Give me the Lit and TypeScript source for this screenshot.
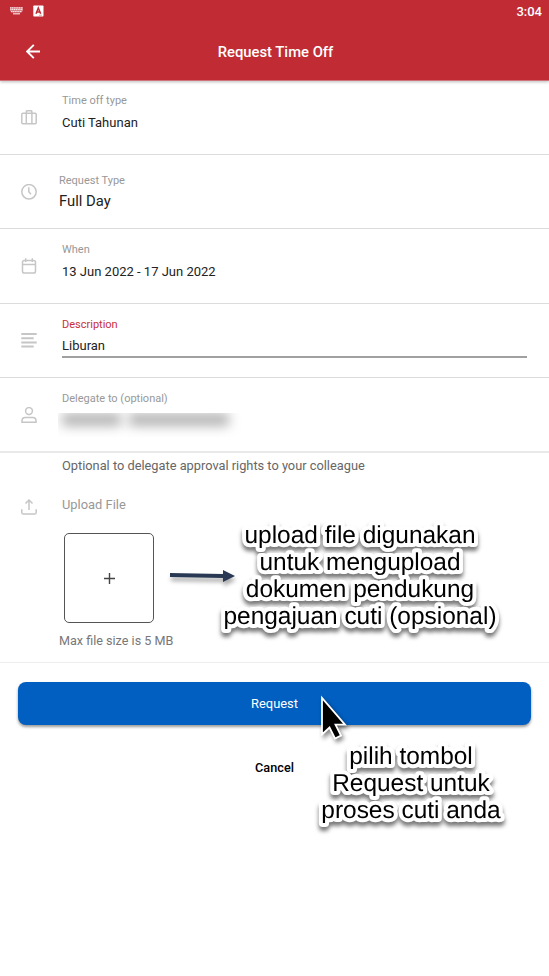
import { LitElement, html, css, svg, nothing } from "lit";
import { customElement, property } from "lit/decorators.js";

const icons = {
  suitcase: svg`<rect x=".8" y="3.2" width="14.4" height="10.6" rx="1"/><path d="M5.3 13.7V1.9Q5.3 .7 6.4 .7h3.4q1.1 0 1.1 1.2v11.8"/>`,
  clock: svg`<circle cx="8" cy="7.8" r="7.2"/><path d="M7.8 3.3v4.5l2.2 2.4"/>`,
  calendar: svg`<rect x="1.5" y="2.5" width="13" height="12.5" rx="1.8"/><path d="M1.3 6.5h13.2M4.7 .2v3.8M11.3 .2v3.8"/>`,
  lines: svg`<path stroke-width="2" d="M.3 1h15.4M.3 5.2h12.4M.3 9.4h15.4M.3 13.6h12.4"/>`,
  person: svg`<circle cx="8" cy="4" r="3.4"/><path d="M1 15.2v-1.4Q1 10.4 4.2 10.4h7.6q3.2 0 3.2 3.4v1.4z"/>`,
  upload: svg`<path d="M8 11V1.2M4.5 4.5 8 1l3.5 3.5M.8 10.3v3.2q0 1.6 1.6 1.6h11.2q1.6 0 1.6-1.6v-3.2"/>`,
};

const glyph = (name: keyof typeof icons) => html`
  <svg width="16" height="16" viewBox="0 0 16 16" fill="none" stroke="#c6c6c6" stroke-width="1.5">${icons[name]}</svg>`;

@customElement("form-row")
class FormRow extends LitElement {
  @property() icon: keyof typeof icons = "clock";
  @property() label = "";
  @property() value = "";
  @property() action = "";

  static styles = css`
    :host { display: grid; grid-template-columns: 62px 1fr 22px; box-sizing: border-box; height: 74px; border-bottom: 1px solid #dcdcdc; }
    :host([tall]) { height: 75px; }
    :host([last]) { border-bottom: 2px solid #e9e9e9; }
    .icon { padding: 28.5px 0 0 21px; }
    svg { display: block; }
    .body { padding-top: 13px; white-space: nowrap; }
    .label { font-size: 11px; line-height: 14px; color: #989898; }
    .value { font-size: 13px; line-height: 18px; margin-top: 6px; color: #222; }
    .trail { padding-top: 34px; display: flex; justify-content: flex-end; align-items: flex-start; margin-right: 24px; }
    :host([tall]) .body { padding-top: 14px; }
    :host([large]) .body { margin-left: -3px; padding-top: 19px; }
    :host([large]) .value { font-size: 14.8px; margin-top: 4px; }
    :host([large]) .trail { padding-top: 43px; margin-right: 35px; }
    :host([active]) .body { padding-top: 13.5px; }
    :host([active]) .label { color: #c92f3a; }
    :host([active]) .value { margin-top: 5.5px; padding-bottom: 1px; border-bottom: 2px solid #a0a0a0; }
    .trail.x { padding-top: 30px; margin-right: 23px; }
    .smudge { display: flex; gap: 8px; margin: 7px 0 0 -4px; padding: 0 4px; height: 24px; overflow: hidden; }
    .blob { height: 13px; background: #b2b2b2; filter: blur(6px); }
    .first { width: 59px; }
    .second { width: 100px; }
  `;

  render() {
    return html`
      <div class="icon">${glyph(this.icon)}</div>
      <div class="body">
        <div class="label">${this.label}</div>
        ${this.value
          ? html`<div class="value">${this.value}</div>`
          : html`<div class="smudge"><div class="blob first"></div><div class="blob second"></div></div>`}
      </div>
      ${this.action === "menu"
        ? html`<div class="trail"><svg width="10" height="5" viewBox="0 0 10 5"><path d="M.3 0h9.4L5 5z" fill="#999"/></svg></div>`
        : this.action === "clear"
          ? html`<div class="trail x"><svg width="13" height="13" viewBox="0 0 13 13"><path d="m.7.7 11.6 11.6M12.3.7.7 12.3" stroke="#666" stroke-width="1.3"/></svg></div>`
          : nothing}
    `;
  }
}

/** Centred caption lines with a white outline. */
const caption = (lines: string[]) =>
  lines.map((text, i) => svg`<text x="150" y=${30 + i * 27}>${text}</text>`);

@customElement("app-root")
class AppRoot extends LitElement {
  static styles = css`
    :host { display: block; position: relative; height: 976px; overflow: hidden; background: #fff; font-family: Roboto, "Liberation Sans", sans-serif; }
    svg { display: block; }
    header { position: relative; height: 80px; background: #c02b34; color: #fff; border-bottom: 1px solid #cf747b; box-shadow: 0 1px 3px #0004; }
    .status { display: flex; align-items: center; height: 22px; padding: 0 7px 0 10px; }
    .badge { margin-left: 10px; }
    .time { margin-left: auto; font-size: 13px; font-weight: 500; line-height: 22px; padding-top: 1px; }
    .bar { display: grid; grid-template-columns: 52px 1fr 50px; align-items: center; height: 58px; }
    .back { padding-left: 26px; }
    .title { text-align: center; font-size: 14.8px; font-weight: 500; padding-top: 1px; }
    .upload { display: grid; grid-template-columns: 62px 1fr; align-content: start; height: 209px; border-bottom: 1px solid #ededed; white-space: nowrap; }
    .hint { grid-column: 2; font-size: 12.8px; line-height: 16px; color: #666; padding-top: 5px; height: 21px; }
    .upicon { padding: 20px 0 0 21px; }
    .files { padding-top: 17px; }
    .heading { font-size: 12.9px; line-height: 18px; color: #989898; }
    .drop { display: grid; place-items: center; box-sizing: border-box; width: 90px; height: 90px; margin: 19px 0 0 2px; border: 1px solid #555; border-radius: 5px; }
    .limit { margin: 10px 0 0 -3px; font-size: 12.6px; line-height: 16px; color: #777; }
    .actions { display: flex; flex-direction: column; align-items: center; padding: 18.5px 18px 0; }
    .request { width: 100%; height: 43.5px; border-radius: 8px; background: #005fc0; color: #fff; display: grid; place-items: center; font-size: 12.9px; box-shadow: 0 2px 3px #0006; }
    .cancel { margin-top: 34px; font-size: 12.7px; line-height: 18px; font-weight: 500; color: #000; }
    .note { position: absolute; font-family: "Liberation Sans", Arial, sans-serif; font-size: 24.45px; text-rendering: geometricPrecision; fill: #000; stroke: #fff; stroke-width: 8px; stroke-linejoin: round; paint-order: stroke fill; text-anchor: middle; filter: drop-shadow(0 4px 2px #0008); }
    .note-file { left: 209.5px; top: 513px; }
    .note-send { left: 260.5px; top: 734px; }
    .arrow { position: absolute; left: 168px; top: 564px; filter: drop-shadow(1px 4px 2px #0005); }
    .pointer { position: absolute; left: 319px; top: 694px; filter: drop-shadow(2px 3px 2px #0007); }
  `;

  render() {
    return html`
      <header>
        <div class="status">
          <svg width="13" height="8" viewBox="0 0 13 8"><path d="M0 .8h13M.3 2.7h12.4M1 4.6h11" stroke="#f6dcdf" stroke-width="1.3" stroke-dasharray="1.3 .5"/><path d="M0 0v4l2 1.5h9L13 4V0" fill="#fff" opacity=".3"/><path d="M3 6.8h7" stroke="#f6dcdf" stroke-width="1.2"/></svg>
          <svg class="badge" width="11" height="12" viewBox="0 0 11 12"><rect x=".3" y=".5" width="10.2" height="11" rx=".8" fill="#fff"/><path d="M3 8.8 5.3 3l2.4 5.8M3.7 7h3.2" fill="none" stroke="#c02b34" stroke-width="1.5"/><path d="M6 10.2h3" stroke="#dba0a4"/></svg>
          <span class="time">3:04</span>
        </div>
        <div class="bar">
          <svg class="back" width="15" height="15" viewBox="0 0 15 15"><path d="M14 7.5H1.2M7.8.8 1.1 7.5l6.7 6.7" fill="none" stroke="#fff" stroke-width="1.9"/></svg>
          <div class="title">Request Time Off</div>
        </div>
      </header>
      <form-row icon="suitcase" label="Time off type" value="Cuti Tahunan" action="menu"></form-row>
      <form-row large icon="clock" label="Request Type" value="Full Day" action="menu"></form-row>
      <form-row tall icon="calendar" label="When" value="13 Jun 2022 - 17 Jun 2022"></form-row>
      <form-row active icon="lines" label="Description" value="Liburan"></form-row>
      <form-row tall last icon="person" label="Delegate to (optional)" action="clear"></form-row>
      <section class="upload">
        <div class="hint">Optional to delegate approval rights to your colleague</div>
        <div class="upicon">${glyph("upload")}</div>
        <div class="files">
          <div class="heading">Upload File</div>
          <div class="drop"><svg width="11" height="11" viewBox="0 0 11 11"><path d="M5.5 0v11M0 5.5h11" stroke="#444" stroke-width="1.4"/></svg></div>
          <div class="limit">Max file size is 5 MB</div>
        </div>
      </section>
      <div class="actions">
        <div class="request">Request</div>
        <div class="cancel">Cancel</div>
      </div>
      <svg class="arrow" width="70" height="24" viewBox="0 0 70 24"><path d="M2 9l53 1V6l12 6-12 6v-4L2 13z" fill="#2a3953"/></svg>
      <svg class="note note-file" width="300" height="130">${caption([
        "upload file digunakan",
        "untuk mengupload",
        "dokumen pendukung",
        "pengajuan cuti (opsional)",
      ])}</svg>
      <svg class="pointer" width="32" height="50" viewBox="0 0 32 50"><path d="M3 4v36.5l7.5-7L16 44.5l6-3-5.5-10.8H26z" fill="#000" stroke="#fff" stroke-width="1.8"/></svg>
      <svg class="note note-send" width="300" height="104">${caption([
        "pilih tombol",
        "Request untuk",
        "proses cuti anda",
      ])}</svg>
    `;
  }
}
